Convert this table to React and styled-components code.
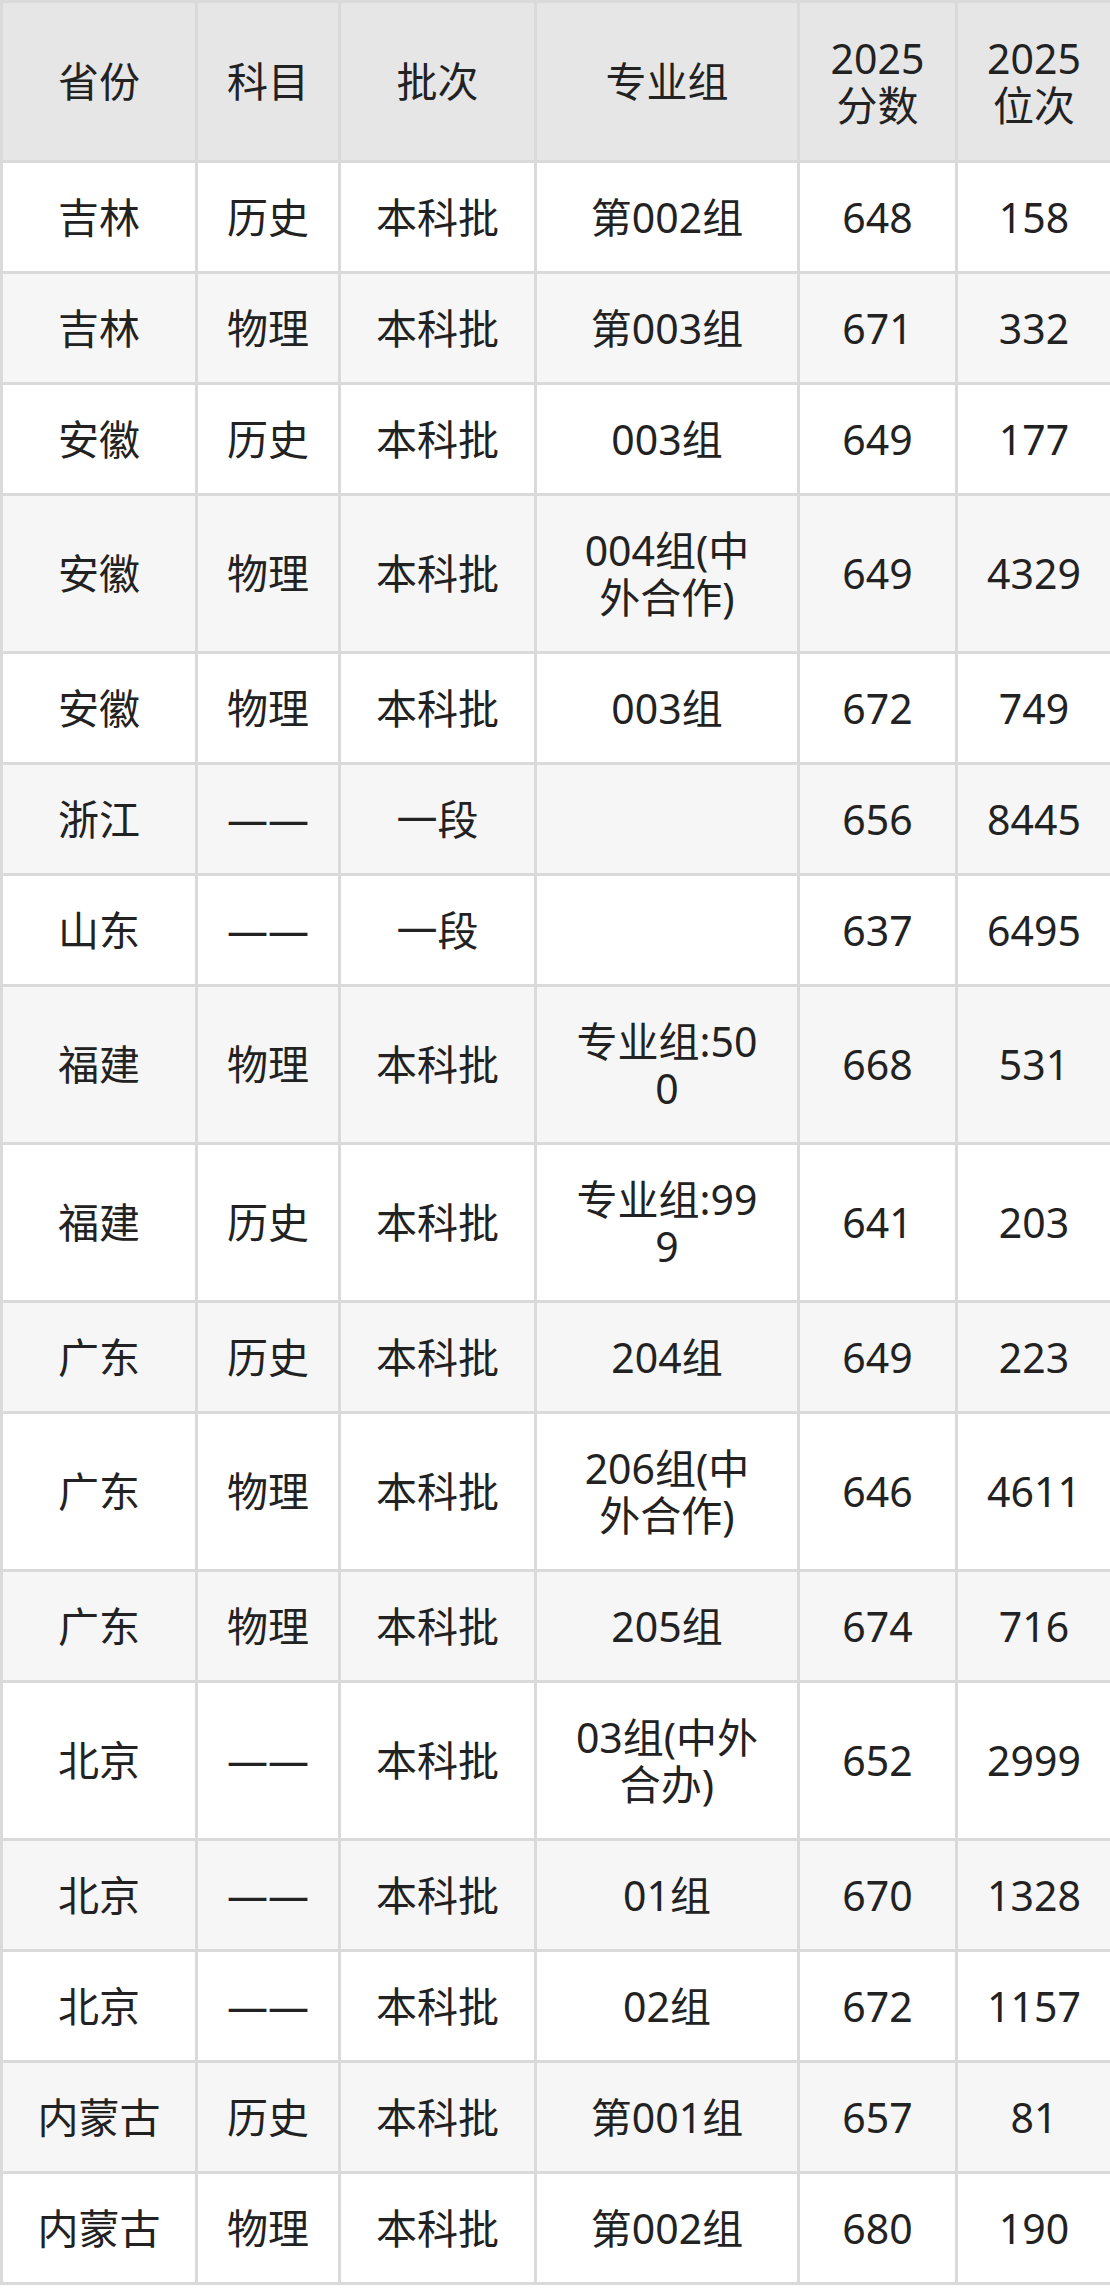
import React from "react";
import styled, { createGlobalStyle } from "styled-components";

const Global = createGlobalStyle`
  html, body { margin: 0; padding: 0; background: #fff; }
  body { font-family: "Noto Sans", "Noto Sans CJK SC", sans-serif; }
`;

const Table = styled.table`
  width: 1110px;
  border-collapse: collapse;
  table-layout: fixed;
  border: 3px solid #dadada;
  color: #222;
  font-size: 41px;
`;

const Cell = styled.td`
  border: 3px solid #dadada;
  padding: 30.5px 6px;
  line-height: 47px;
  text-align: center;
  vertical-align: middle;
  white-space: nowrap;
`;

const HeadCell = styled(Cell).attrs({ as: "th" })`
  background: #e6e6e6;
  font-weight: 400;
  padding: 31.5px 6px;
`;

const Row = styled.tr`
  background: ${(p) => (p.$striped ? "#f6f6f6" : "#ffffff")};
`;

const widths = [195, 143, 196, 263, 158, 155];

const headers = [["省份"], ["科目"], ["批次"], ["专业组"], ["2025", "分数"], ["2025", "位次"]];

const rows = [
  ["吉林", "历史", "本科批", ["第002组"], "648", "158"],
  ["吉林", "物理", "本科批", ["第003组"], "671", "332"],
  ["安徽", "历史", "本科批", ["003组"], "649", "177"],
  ["安徽", "物理", "本科批", ["004组(中", "外合作)"], "649", "4329"],
  ["安徽", "物理", "本科批", ["003组"], "672", "749"],
  ["浙江", "——", "一段", [""], "656", "8445"],
  ["山东", "——", "一段", [""], "637", "6495"],
  ["福建", "物理", "本科批", ["专业组:50", "0"], "668", "531"],
  ["福建", "历史", "本科批", ["专业组:99", "9"], "641", "203"],
  ["广东", "历史", "本科批", ["204组"], "649", "223"],
  ["广东", "物理", "本科批", ["206组(中", "外合作)"], "646", "4611"],
  ["广东", "物理", "本科批", ["205组"], "674", "716"],
  ["北京", "——", "本科批", ["03组(中外", "合办)"], "652", "2999"],
  ["北京", "——", "本科批", ["01组"], "670", "1328"],
  ["北京", "——", "本科批", ["02组"], "672", "1157"],
  ["内蒙古", "历史", "本科批", ["第001组"], "657", "81"],
  ["内蒙古", "物理", "本科批", ["第002组"], "680", "190"],
];

const Lines = ({ lines }) =>
  lines.map((l, i) => (
    <React.Fragment key={i}>
      {i > 0 && <br />}
      {l}
    </React.Fragment>
  ));

export default function App() {
  return (
    <>
      <Global />
      <Table>
        <colgroup>
          {widths.map((w, i) => (
            <col key={i} style={{ width: w }} />
          ))}
        </colgroup>
        <thead>
          <tr>
            {headers.map((h, i) => (
              <HeadCell key={i}>
                <Lines lines={h} />
              </HeadCell>
            ))}
          </tr>
        </thead>
        <tbody>
          {rows.map((r, i) => (
            <Row key={i} $striped={i % 2 === 1}>
              <Cell>{r[0]}</Cell>
              <Cell>{r[1]}</Cell>
              <Cell>{r[2]}</Cell>
              <Cell>
                <Lines lines={r[3]} />
              </Cell>
              <Cell>{r[4]}</Cell>
              <Cell>{r[5]}</Cell>
            </Row>
          ))}
        </tbody>
      </Table>
    </>
  );
}
